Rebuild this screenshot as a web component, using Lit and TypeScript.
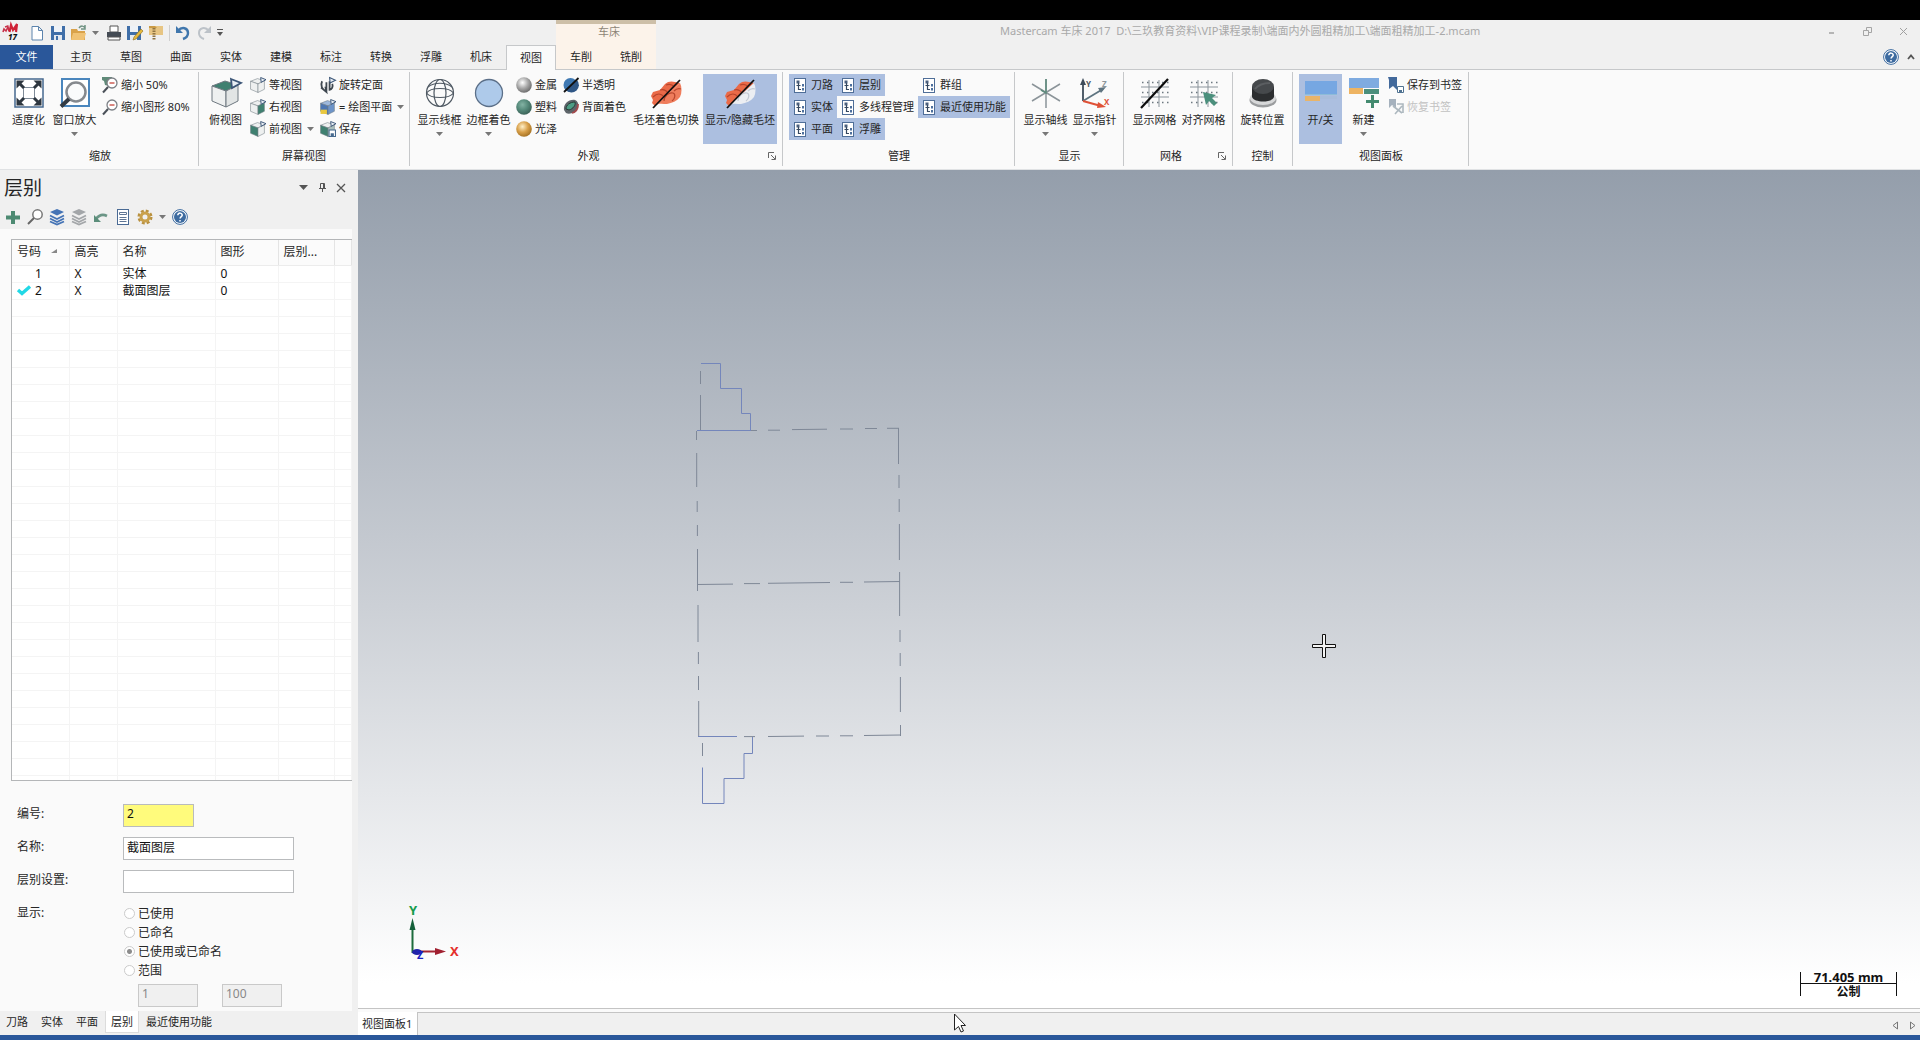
import { LitElement, html, svg, css, nothing } from "lit";
import type { TemplateResult } from "lit";
import { customElement, state } from "lit/decorators.js";
import { classMap } from "lit/directives/class-map.js";

type Tpl = TemplateResult;

const icon = (size: number, box: string, body: unknown) => html`
  <svg width=${size} height=${size} viewBox=${box} fill="none" aria-hidden="true">${body}</svg>`;
const i16 = (body: unknown) => icon(16, "0 0 16 16", body);
const i30 = (body: unknown) => icon(30, "0 0 30 30", body);

/* ---------- quick access icons ---------- */
const logo = icon(18, "0 0 18 18", svg`
  <path d="M1 8 L2 5 L4 7 L6 3 L7 7 M3 3 L6 2" stroke="#c8324a" stroke-width="1.6"/>
  <path d="M7.500 8 L9 1 L11 6 L15 0 L14 8 M10 6 L15 4" stroke="#cf2237" stroke-width="2.200"/>
  <text x="6" y="16" font-family="Noto Sans, sans-serif" font-size="8" font-weight="800" font-style="italic" fill="#111">17</text>`);
const newFile = i16(svg`<path d="M3 1.500h6.500l4 4v9.500H3z M9.500 1.500v4h4" fill="#fff" stroke="#5c84ad"/>`);
const save = i16(svg`
  <path d="M1 1h14v14H1z" fill="#3f6ea8"/><path d="M4 1h8v6H4z" fill="#eef2f7"/>
  <path d="M4 10h8v5H4z" fill="#e4e9f0"/><path d="M6 11h2v4H6z" fill="#3f6ea8"/>`);
const openFile = i16(svg`
  <path d="M0 4h6l1 2h7v9H0z" fill="#d9a24a"/><path d="M2 8h13l-2 7H0z" fill="#f0c274"/>
  <path d="M8 3c2-3 5-2 6 0M14 0v4h-4" stroke="#6f9282" stroke-width="1.500"/>`);
const printer = i16(svg`
  <path d="M4 1h8v6H4z" fill="#fff" stroke="#555"/><path d="M1 7h14v5H1z" fill="#444b54"/>
  <path d="M2 12h12v3H2z" fill="#fff" stroke="#555"/>`);
const saveAs = i16(svg`
  <path d="M0 1h14v14H0z" fill="#3f6ea8"/><path d="M3 1h8v6H3z" fill="#eef2f7"/><path d="M3 10h7v5H3z" fill="#e4e9f0"/>
  <path d="M7 12l7-8 2 2-7 8-3 1z" fill="#e6b93c" stroke="#8a6a1e" stroke-width=".6"/>`);
const zip = i16(svg`
  <path d="M1 1h14v9H1z" fill="#e7c583"/><path d="M1 1h6l2 2H1z" fill="#c99a45"/>
  <path d="M6 3v12" stroke="#8f7442" stroke-width="3" stroke-dasharray="1.500 1"/>`);
const undo = i16(svg`<path d="M3 6c4-5 10-3 10 2 0 3-2 5-5 6" stroke="#4077ad" stroke-width="2.400"/><path d="M1 1v7h7z" fill="#4077ad"/>`);
const redo = i16(svg`<path d="M13 6c-4-5-10-3-10 2 0 3 2 5 5 6" stroke="#bcc2c8" stroke-width="2"/><path d="M15 1v7h-7z" fill="#bcc2c8"/>`);

const caret = html`<svg class="caret" width="7" height="4" viewBox="0 0 7 4" aria-hidden="true"><path d="M0 0h7L3.500 4z" fill="#777"/></svg>`;

/* ---------- ribbon icons ---------- */
const fit = i30(svg`
  <rect x="1" y="1" width="28" height="28" fill="#fff" stroke="#46688f" stroke-width="1.500"/>
  <rect x="9.500" y="9.500" width="11" height="11" stroke="#7f8b98"/>
  <path d="M10 10L6 6M20 10l4-4M10 20l-4 4M20 20l4 4" stroke="#2e3740" stroke-width="3"/>
  <path d="M2.500 2.500h8l-8 8zM27.500 2.500v8l-8-8zM2.500 27.500v-8l8 8zM27.500 27.500h-8l8-8z" fill="#2e3740"/>`);
const zoomWindow = i30(svg`
  <rect x="2" y="1" width="27" height="27" fill="#fff" stroke="#4a86bd" stroke-width="2"/>
  <circle cx="16" cy="14" r="9.500" fill="#fafbfc" stroke="#85898e" stroke-width="2.500"/>
  <path d="M9 21l-8 7.500" stroke="#333b44" stroke-width="4"/>`);
const zoomOut = (green: boolean) => i16(svg`
  ${green ? svg`<path d="M0 0h10v3L5 4l2 5-4-1-1-4-2-1z" fill="#5f8a78"/>` : nothing}
  <circle cx="10" cy="6" r="5" fill="#fff" stroke="#7c8086" stroke-width="1.300"/>
  <path d="M7.500 6h5" stroke="#c4453c" stroke-width="1.300"/><path d="M6 10l-5 5.500" stroke="#4a5058" stroke-width="2"/>`);

const cubeShape = (top: string, left: string, right: string) => svg`
  <path d="M1 8L14 3l13 4-12 6z" fill=${top} stroke="#6e7880"/>
  <path d="M1 8l14 5v16L1 23z" fill=${left} stroke="#6e7880"/>
  <path d="M15 13l12-6v16l-12 6z" fill=${right} stroke="#6e7880"/>
  <path d="M20 1l10 4-9 5z" fill="#e8eef4" stroke="#3c5677" stroke-width="1.800"/>`;
const G = "#3f8070";
const W = "#eef0f0";
const cubeBig = i30(cubeShape(G, W, "#e2e5e5"));
const cubeSmall = (t: string, l: string, r: string, extra: unknown = nothing) =>
  icon(16, "0 0 30 30", svg`${cubeShape(t, l, r)}${extra}`);
const rotatePlane = icon(16, "0 0 30 30", svg`
  <path d="M4 8c-4 8 0 16 8 19M12 27V10M2 20l10 8-2-10M18 8v16c4 0 7-6 5-11" stroke="#3f4850" stroke-width="3.400"/>
  <path d="M18 1l11 5-10 5z" fill="#e8eef4" stroke="#3c5677" stroke-width="2"/>`);

const wireSphere = i30(svg`
  <g stroke="#4f5963" stroke-width="1.200"><circle cx="15" cy="15" r="13.500"/><ellipse cx="15" cy="15" rx="6" ry="13.500"/>
  <path d="M1.500 15c4-6 23-6 27 0M1.500 15c4 6 23 6 27 0M3 9c6-5 18-5 24 0"/></g>`);
const shadedSphere = i30(svg`<circle cx="15" cy="15" r="13.500" fill="#aecaea" stroke="#5b6f88" stroke-width="1.300"/>`);
const ball = (id: string, hi: string, mid: string, lo: string) => i16(svg`
  <defs><radialGradient id=${id} cx=".4" cy=".35" r=".65"><stop offset="0" stop-color=${hi}/><stop offset=".55" stop-color=${mid}/><stop offset="1" stop-color=${lo}/></radialGradient></defs>
  <circle cx="8" cy="8" r="7.800" fill=${`url(#${id})`}/>`);
const translucent = i16(svg`<circle cx="7.500" cy="8" r="7" fill="#3f79b3"/><path d="M14 3a7 7 0 0 1-11 10z" fill="#2e5685"/><path d="M1 15L15.500 1" stroke="#111" stroke-width="1.800"/>`);
const backface = i16(svg`
  <path d="M1 11C0 5 6 0 12 1c3 1 4 5 3 8-2 4-8 7-12 5z" fill="#5d6469"/><path d="M9 14c4-1 6-5 6-9" stroke="#a2494c" stroke-width="1.800"/>
  <path d="M3 10c0-4 4-7 9-7 1 3-2 7-6 8z" fill="#4d9c84" stroke="#263b35"/>`);
const stock = (white: boolean) => icon(32, "0 0 32 30", svg`
  <path d="M1 17l2-4 7-2 5-6c3-3 7-3 10-2l5 1L5 27l-3-3 1-3z" fill="#ea6a48"/>
  <path d="M3 18c4-4 8-4 11 0M10 11c3-1 6 0 8 3M16 6c3-1 6-1 8 2" stroke="#b8462d" stroke-width="1.200"/>
  <path d="M30 4c2 4 2 10 0 14-3 4-8 6-13 7-4 0-8-1-11 1z" fill=${white ? "#eceef2" : "#ef7d5c"}/>
  <path d="M14 22c0-5 5-9 9-8 3 1 2 6-1 8M24 12c2-2 4-3 7-2" stroke=${white ? "#c3c9d3" : "#b8462d"} stroke-width="1.200"/>
  <path d="M3 29L30 1" stroke="#111" stroke-width="1.800"/>`);
const tree = i16(svg`
  <rect x="2.500" y="1.500" width="11" height="14" fill="#fff" stroke="#4f6e98"/>
  <path d="M4.500 3.500h3v3h-3z" fill="#4a5f7d"/><path d="M6.500 6v6.500h2.500M4.500 8.500h4" stroke="#35475f" stroke-width="1.200"/>
  <path d="M10 7h2v2.500h-2zM10 11h2v2.500h-2z" fill="#4d6f9c"/>`);
const axes = i30(svg`<path d="M15 1v29M1 6l28 17M29 6L1 23" stroke="#8b9499" stroke-width="1.500"/><path d="M15 1v14l-5-3" stroke="#5d8a7c" stroke-width="1.500"/>`);
const gnomon = i30(svg`
  <path d="M3 23V4" stroke="#3e4c5a" stroke-width="1.800"/><path d="M0 7L3 0l3 7z" fill="#3e4c5a"/>
  <path d="M3 23L23 11" stroke="#5e7480" stroke-width="1.800"/><path d="M18 10l8-1-5 6z" fill="#5e7480"/>
  <path d="M3 23l18 5" stroke="#df5136" stroke-width="2"/><path d="M18 24l8 5-9 1z" fill="#df5136"/>
  <g font-family="Noto Sans, sans-serif" font-size="8" font-weight="700"><text x="6" y="9" fill="#4a5560">Y</text><text x="22" y="9" fill="#8d969c">Z</text><text x="24" y="27" fill="#df5136">X</text></g>`);
const gridLines = svg`
  <path d="M1 9h28M1 19h28M9 2v27M19 2v27" stroke="#8c959c"/>
  <path d="M2 4.500h27M2 14.500h27M2 24.500h27" stroke="#6d7880" stroke-width="1.500" stroke-dasharray="1.500 3.500"/>`;
const gridShow = i30(svg`${gridLines}<path d="M1 30L28 1" stroke="#0c0c0c" stroke-width="2.200"/>`);
const gridSnap = i30(svg`${gridLines}<path d="M14 14l13 3-4 3 5 5-3 3-5-5-3 4z" fill="#4b8f7c"/>`);
const knob = i30(svg`
  <ellipse cx="15" cy="22" rx="13.500" ry="7.500" fill="#9a9c9e"/><ellipse cx="15" cy="20" rx="13" ry="7" fill="#d7d8d9"/>
  <path d="M4 9v10c2 6 20 6 22 0V9z" fill="#2c2e30"/><ellipse cx="15" cy="8.500" rx="11" ry="7.500" fill="#46494c"/><path d="M7 11c4-5 9-6 15-6" stroke="#5b5e61" stroke-width="2"/>`);
const sheetToggle = icon(32, "0 0 32 30", svg`<path d="M0 2h32v14H0z" fill="#76a7e2"/><path d="M0 15h32v1H0z" fill="#8dbcd8"/><path d="M0 17h15v5H0z" fill="#e9b469"/><path d="M15 17h17v3H15z" fill="#a9bddb"/>`);
const sheetNew = icon(30, "0 0 30 30", svg`<path d="M0 0h30v10H0z" fill="#7fabe0"/><path d="M0 10h14v6H0z" fill="#eeb462"/><path d="M15 11h15v5H15z" fill="#4b8f7c"/><path d="M23.500 17v13M17 23.500h13" stroke="#438a6f" stroke-width="3"/>`);
const bookmark = (off: boolean) => i16(off
  ? svg`<path d="M1 0h7v9L4 6 1 9z" fill="#a5b1bd"/><path d="M5 7l9 7M14 7l-7 8M9 5h6v9" stroke="#adb8bf" stroke-width="1.600"/>`
  : svg`<path d="M0 0h9v13l-4-4-4 3V3z" fill="#42699b"/><path d="M9.500 9.500h6v6h-6z" fill="#fff" stroke="#4f7291"/><path d="M11 13h3v2h-3z" fill="#4f7291"/>`);
const launcher = html`<button class="launch" aria-label="对话框"><svg width="8" height="8" viewBox="0 0 8 8" fill="none"><path d="M.5 6V.500H6M3 3l4 4M7.500 3.500v4h-4" stroke="#666"/></svg></button>`;

/* ---------- panel icons ---------- */
const help = i16(svg`<circle cx="8" cy="8" r="7.400" fill="#fff" stroke="#3d6ba0"/><circle cx="8" cy="8" r="6" fill="#3d6ba0"/>
  <path d="M5.800 6.300c0-3 4.600-2.800 4.400 0-.1 1.300-2.100 1.500-2.100 3.200M8 11v1.500" stroke="#fff" stroke-width="1.500"/>`);
const layers = (c: string) => i16(svg`<path d="M8 0l7 3-7 3.500L1 3z" fill=${c}/><path d="M1 6.500l7 3.500 7-3.500M1 9.500L8 13l7-3.500M1 12.500l7 3 7-3" stroke=${c} stroke-width="1.800"/>`);
const panelTools: { label: string; art: Tpl }[] = [
  { label: "添加", art: i16(svg`<path d="M8 2v13M1 8.500h14" stroke="#4d8a72" stroke-width="4"/>`) },
  { label: "查找", art: i16(svg`<circle cx="10.500" cy="5.500" r="4.700" fill="#fff" stroke="#777" stroke-width="1.500"/><path d="M7 9l-6 6" stroke="#666" stroke-width="2"/>`) },
  { label: "全部显示", art: layers("#4473b5") },
  { label: "全部隐藏", art: layers("#a3a6a9") },
  { label: "重置", art: i16(svg`<path d="M14 7c-4-2-8-1-11 3" stroke="#6b9586" stroke-width="2.600"/><path d="M1 6v7h7z" fill="#5b8d7a"/>`) },
  { label: "属性", art: i16(svg`<rect x="2.500" y=".5" width="11" height="15" fill="#fff" stroke="#4a6a94"/><path d="M4.500 3.500h7v2h-7zM4.500 8.500h7M4.500 10.500h7M4.500 12.500h7" stroke="#5f7594"/>`) },
];
const gear = i16(svg`<circle cx="8" cy="8" r="6.300" stroke="#b9913f" stroke-width="2.400" stroke-dasharray="2.900 2.050"/><circle cx="8" cy="8" r="4" stroke="#c9a14c" stroke-width="3"/>`);

const big = (art: Tpl, label: string, o: { menu?: boolean; on?: boolean; cls?: string } = {}) => html`
  <button class="big ${o.cls ?? ""} ${o.on ? "on" : ""}">
    <span class="art">${art}</span><span class="lbl">${label}</span>${o.menu ? caret : nothing}
  </button>`;
const small = (art: Tpl, label: string, o: { menu?: boolean; on?: boolean; off?: boolean } = {}) => html`
  <button class="small ${o.on ? "on" : ""}" ?disabled=${o.off ?? false}>${art}<span>${label}</span>${o.menu ? caret : nothing}</button>`;
const group = (cls: string, label: string, body: Tpl, launch = false) => html`
  <section class="group ${cls} ${launch ? "launches" : ""}" aria-label=${label}>
    <div class="tools">${body}</div>
    <div class="caption">${label}</div>${launch ? launcher : nothing}
  </section>`;

@customElement("app-root")
export class AppRoot extends LitElement {
  @state() private level = 2;

  static styles = css`
    :host { display: block; --line: #c6c8ca; --sel: #acbfe0; --fog: #f0f0f0; --paper: #fafafa;
      font-family: "Noto Sans", "Noto Sans CJK SC", sans-serif; font-size: 11px; line-height: 16px; color: #262626; }
    * { box-sizing: border-box; }
    button, input { font: inherit; color: inherit; margin: 0; }
    button { background: none; border: 0; padding: 0; white-space: nowrap; }
    svg { display: block; flex: none; overflow: visible; }
    .app { position: relative; height: 100vh; display: flex; flex-direction: column; overflow: hidden; background: var(--fog); }
    .strip { height: 20px; background: #000; flex: none; }

    .top { display: grid; grid-template-columns: 556px 100px 1fr; grid-template-rows: 25px 24px; border-bottom: 1px solid var(--line); flex: none; }
    .quick { display: flex; align-items: center; gap: 5px; padding: 0 2px; }
    .quick button { display: flex; }
    .quick .caret { margin: 0 2px 0 0; }
    .quick .sep { width: 1px; height: 16px; background: #cfcfcf; }
    .quick .logo { margin-right: 4px; }
    .ctx { background: #fcf3ea; border-top: 4px solid #cdbfa8; color: #8d8577; text-align: center; padding-left: 6px; }
    .title { display: flex; align-items: center; padding: 0 12px 3px 0; color: #a9a9a9; }
    .title h1 { margin: 0 auto 0 344px; font-size: 11px; font-weight: 400; white-space: pre; line-height: 16px; }
    .title .win { display: flex; gap: 27px; }
    .tabs { display: flex; }
    .tabs button { width: 50px; height: 24px; }
    .tabs .file { width: 53px; margin-right: 3px; background: #2a579a; color: #fff; }
    .tabs .active { position: relative; background: var(--paper); border: 1px solid var(--line); border-bottom: 0; height: 25px; }
    .tabs.extra { background: #fcf3ea; }
    .right { display: flex; justify-content: flex-end; align-items: center; gap: 8px; padding-right: 5px; }

    .ribbon { display: flex; height: 100px; padding: 2px 0; background: var(--paper); border-bottom: 1px solid #e0e2e4; flex: none; }
    .group { position: relative; display: flex; flex-direction: column; height: 94px; padding: 2px 0 0 5px; border-right: 1px solid var(--line); flex: none; }
    .zoom { width: 199px; padding-left: 7px; } .views { width: 211px; } .look { width: 373px; } .manage { width: 232px; }
    .pair { width: 109px; } .control { width: 60px; } .sheets { width: 176px; }
    .tools { display: flex; height: 70px; }
    .caption { margin: 4px 5px 0 0; text-align: center; line-height: 16px; }
    .launches .caption { margin-right: 20px; }
    .launch { position: absolute; right: 6px; bottom: 6px; }
    .big { display: flex; flex-direction: column; align-items: center; width: 49px; height: 70px; padding-top: 4px; flex: none; }
    .big.mid { width: 43px; }
    .big.wide { width: 74px; }
    .big .art { height: 30px; margin-bottom: 4px; }
    .big .caret { margin-top: 4px; }
    .col { display: flex; flex-direction: column; align-items: flex-start; }
    .small { display: flex; align-items: center; gap: 3px; height: 22px; padding: 0 3px; }
    .small .caret { margin-left: 2px; }
    .small:disabled { color: #c2c2c2; }
    .on { background: var(--sel); }
    .manage, .pair, .sheets { padding-left: 6px; }
    .manage .small { padding-right: 4px; }

    .work { flex: 1; min-height: 0; display: flex; }
    .side { width: 352px; display: flex; flex-direction: column; background: var(--paper); flex: none; }
    .side header { display: flex; align-items: center; gap: 10px; height: 35px; padding: 0 7px 0 4px; background: var(--fog); }
    .side h2 { margin: 0 auto 0 0; font-size: 19px; font-weight: 400; line-height: 24px; }
    .bar { display: flex; align-items: center; gap: 6px; height: 24px; padding: 0 5px; background: var(--fog); }
    .bar .gearmenu { display: flex; align-items: center; gap: 6px; }
    .grid { flex: 1; min-height: 0; overflow: hidden; margin: 10px 0 0 11px; border: 1px solid #b4b6b8; border-right: 0; background: #fff; font-size: 12px; }
    table { width: 100%; border-collapse: collapse; table-layout: fixed; }
    th { height: 25px; padding: 0 0 0 5px; text-align: left; font-weight: 400; background: #fbfbfb; border-right: 1px solid #e4e4e4; border-bottom: 1px solid #ececec; white-space: nowrap; }
    th .sort { display: inline-block; margin: 0 0 3px 10px; }
    td { height: 17px; padding: 0 0 0 5px; line-height: 16px; border-right: 1px solid #f4f4f4; border-bottom: 1px solid #f4f4f4; white-space: nowrap; color: #111; }
    .c1 { width: 57px; } .c2 { width: 48px; } .c3 { width: 98px; } .c4 { width: 63px; } .c5 { width: 56px; }
    .no { display: flex; align-items: center; gap: 3px; }
    .no .mark { width: 15px; }
    .form { display: grid; grid-template-columns: 106px auto; row-gap: 10px; justify-content: start; padding: 23px 0 4px 17px; font-size: 12px; line-height: 20px; }
    input[type="text"] { height: 23px; width: 171px; padding: 0 3px 4px; border: 1px solid #b9bbbd; background: #fff; color: #111; outline: 0; }
    input.num { width: 71px; background: #fffb7c; }
    .opts { display: flex; flex-direction: column; align-items: flex-start; padding: 1px 0 0 1px; border: 0; margin: 0; min-width: 0; }
    .opts label { display: flex; align-items: center; gap: 3px; height: 19px; }
    input[type="radio"] { appearance: none; width: 11px; height: 11px; border: 1px solid #cbcbcb; border-radius: 50%; background: #fff; }
    input[type="radio"]:checked { background: radial-gradient(circle, #8c8c8c 0 2px, #fff 3px); }
    .range { display: flex; gap: 24px; padding: 4px 0 0 14px; }
    .range input { width: 60px; background: var(--fog); color: #888; border-color: #c9c9c9; }
    .sidetabs { display: flex; gap: 1px; height: 24px; background: var(--fog); }
    .sidetabs button { height: 22px; padding: 0 6px; }
    .sidetabs .cur { background: #fff; border: 1px solid #dcdcdc; border-top: 0; padding: 0 5px; }

    .stage { flex: 1; min-width: 0; display: flex; flex-direction: column; margin-left: 6px; }
    .view { position: relative; flex: 1; background: linear-gradient(#949eab, #ccd0d6 52%, #fff 97%); }
    .part { position: absolute; left: 332px; top: 180px; }
    .triad { position: absolute; left: 42px; bottom: 47px; }
    .cross { position: absolute; left: 954px; top: 464px; }
    .scale { position: absolute; right: 23px; bottom: 9px; width: 97px; text-align: center; font-weight: 700; color: #111; }
    .scale .len { font-size: 13px; line-height: 12px; height: 13px; border-bottom: 1px solid #111; }
    .scale .unit { font-size: 12px; line-height: 15px; }
    .scale::before, .scale::after { content: ""; position: absolute; top: 1px; height: 24px; width: 1px; background: #111; }
    .scale::before { left: 0; } .scale::after { right: 0; }
    .sheetbar { display: flex; align-items: center; height: 27px; padding-right: 4px; border-top: 1px solid #c4c4c4; background: linear-gradient(#fafafa 0 3px, #c4c4c4 3px 4px, var(--fog) 4px); }
    .sheetbar .tab { align-self: stretch; margin-top: 3px; padding: 0 5px 0 4px; background: #fff; border-right: 1px solid #c4c4c4; }
    .sheetbar .nav { display: flex; gap: 12px; margin: 7px 0 0 auto; }
    .foot { height: 5px; background: #2a579a; flex: none; }
    .mouse { position: absolute; left: 953px; top: 1013px; }
  `;

  private renderTop() {
    const tabs = ["主页", "草图", "曲面", "实体", "建模", "标注", "转换", "浮雕", "机床", "视图"];
    const quick: [string, Tpl][] = [["打印", printer], ["另存为", saveAs], ["压缩", zip]];
    return html`
      <header class="top">
        <div class="quick">
          <span class="logo">${logo}</span>
          <button aria-label="新建文件">${newFile}</button>
          <button aria-label="保存文件">${save}</button>
          <button aria-label="打开">${openFile}</button>
          ${caret}
          ${quick.map(([l, a]) => html`<button aria-label=${l}>${a}</button>`)}
          <span class="sep"></span>
          <button aria-label="撤销">${undo}</button>
          <button aria-label="重做">${redo}</button>
          <button aria-label="自定义"><svg width="6" height="8" viewBox="0 0 6 8"><path d="M0 0h6v1H0zM0 3h6L3 7z" fill="#555"/></svg></button>
        </div>
        <div class="ctx">车床</div>
        <div class="title">
          <h1>Mastercam 车床 2017  D:\\三玖教育资料\\VIP课程录制\\端面内外圆粗精加工\\端面粗精加工-2.mcam</h1>
          <div class="win">
            <button aria-label="最小化"><svg width="9" height="9" viewBox="0 0 9 9"><path d="M2 5h5v2H2z" fill="#b5b5b5"/></svg></button>
            <button aria-label="还原"><svg width="9" height="9" viewBox="0 0 9 9" fill="none"><path d="M.5 3.500h5v5h-5zM3.500 3V.500h5v5H6" stroke="#a5a5a5"/></svg></button>
            <button aria-label="关闭"><svg width="9" height="9" viewBox="0 0 9 9" fill="none"><path d="M1 1l7 7M8 1L1 8" stroke="#a0a0a0"/></svg></button>
          </div>
        </div>
        <nav class="tabs">
          <button class="file">文件</button>
          ${tabs.map((t) => html`<button class=${classMap({ active: t === "视图" })}>${t}</button>`)}
        </nav>
        <nav class="tabs extra"><button>车削</button><button>铣削</button></nav>
        <div class="right">
          <button aria-label="帮助">${help}</button>
          <button aria-label="折叠功能区"><svg width="8" height="6" viewBox="0 0 8 6" fill="none"><path d="M1 5l3-3.500L7 5" stroke="#555" stroke-width="1.800"/></svg></button>
        </div>
      </header>`;
  }

  private renderRibbon() {
    return html`
      <div class="ribbon">
        ${group("zoom", "缩放", html`
          ${big(fit, "适度化", { cls: "mid" })}${big(zoomWindow, "窗口放大", { menu: true })}
          <div class="col">${small(zoomOut(true), "缩小 50%")}${small(zoomOut(false), "缩小图形 80%")}</div>`)}
        ${group("views", "屏幕视图", html`
          ${big(cubeBig, "俯视图", { cls: "mid" })}
          <div class="col">${small(cubeSmall(W, W, W), "等视图")}${small(cubeSmall(W, W, G), "右视图")}${small(cubeSmall(W, G, W), "前视图", { menu: true })}</div>
          <div class="col">
            ${small(rotatePlane, "旋转定面")}
            ${small(cubeSmall("#9db8dc", "#4d77b3", "#6d94c8", svg`<path d="M1 20h12v8H1z" fill="#e9c83e"/>`), "= 绘图平面", { menu: true })}
            ${small(cubeSmall(W, G, "#a9bdbb", svg`<path d="M17 17h12v12H17z" fill="#fff" stroke="#476a8f" stroke-width="2"/><path d="M20 23h6v6h-6z" fill="#476a8f"/>`), "保存")}
          </div>`)}
        ${group("look", "外观", html`
          ${big(wireSphere, "显示线框", { menu: true })}${big(shadedSphere, "边框着色", { menu: true })}
          <div class="col">
            ${small(ball("metal", "#ffffff", "#a9a9a9", "#6f6f6f"), "金属")}
            ${small(ball("plastic", "#83b3a4", "#55897a", "#3c6459"), "塑料")}
            ${small(ball("gloss", "#fff0c8", "#d8a04a", "#a87425"), "光泽")}
          </div>
          <div class="col">${small(translucent, "半透明")}${small(backface, "背面着色")}</div>
          ${big(stock(false), "毛坯着色切换", { cls: "wide" })}${big(stock(true), "显示/隐藏毛坯", { cls: "wide", on: true })}`, true)}
        ${group("manage", "管理", html`
          <div class="col">${["刀路", "实体", "平面"].map((t) => small(tree, t, { on: true }))}</div>
          <div class="col">${small(tree, "层别", { on: true })}${small(tree, "多线程管理")}${small(tree, "浮雕", { on: true })}</div>
          <div class="col">${small(tree, "群组")}${small(tree, "最近使用功能", { on: true })}</div>`)}
        ${group("pair", "显示", html`${big(axes, "显示轴线", { menu: true })}${big(gnomon, "显示指针", { menu: true })}`)}
        ${group("pair", "网格", html`${big(gridShow, "显示网格")}${big(gridSnap, "对齐网格")}`, true)}
        ${group("control", "控制", html`${big(knob, "旋转位置")}`)}
        ${group("sheets", "视图面板", html`
          ${big(sheetToggle, "开/关", { cls: "mid", on: true })}${big(sheetNew, "新建", { cls: "mid", menu: true })}
          <div class="col">${small(bookmark(false), "保存到书签")}${small(bookmark(true), "恢复书签", { off: true })}</div>`)}
      </div>`;
  }

  private renderSide() {
    const rows = [
      { no: 1, name: "实体", count: 0 },
      { no: 2, name: "截面图层", count: 0 },
    ];
    const check = html`<svg width="14" height="11" viewBox="0 0 14 11" fill="none"><path d="M1 5l4 3.500 8-7" stroke="#22d8e6" stroke-width="3.400"/></svg>`;
    const options = ["已使用", "已命名", "已使用或已命名", "范围"];
    return html`
      <aside class="side">
        <header>
          <h2>层别</h2>
          <button aria-label="窗口位置"><svg width="9" height="5" viewBox="0 0 9 5"><path d="M0 0h9L4.500 5z" fill="#555"/></svg></button>
          <button aria-label="自动隐藏"><svg width="9" height="9" viewBox="0 0 9 9" fill="none"><path d="M2.500 5V.500h4V5M5.500 1v4M1 5.500h7M4.500 6v3" stroke="#555"/></svg></button>
          <button aria-label="关闭面板"><svg width="8" height="8" viewBox="0 0 8 8" fill="none"><path d="M0 0l8 8M8 0L0 8" stroke="#555" stroke-width="1.300"/></svg></button>
        </header>
        <div class="bar">
          ${panelTools.map((t) => html`<button aria-label=${t.label}>${t.art}</button>`)}
          <button class="gearmenu" aria-label="选项">${gear}${caret}</button>
          <button aria-label="面板帮助">${help}</button>
        </div>
        <div class="grid">
          <table>
            <thead><tr>
              <th class="c1">号码<svg class="sort" width="6" height="4" viewBox="0 0 6 4"><path d="M0 4L6 0v4z" fill="#888"/></svg></th>
              <th class="c2">高亮</th><th class="c3">名称</th><th class="c4">图形</th><th class="c5">层别...</th><th></th>
            </tr></thead>
            <tbody>
              ${rows.map((r) => html`<tr @click=${() => (this.level = r.no)}>
                <td><span class="no"><span class="mark">${r.no === this.level ? check : nothing}</span>${r.no}</span></td>
                <td>X</td><td>${r.name}</td><td>${r.count}</td><td></td><td></td></tr>`)}
              ${Array.from({ length: 60 }, () => html`<tr><td></td><td></td><td></td><td></td><td></td><td></td></tr>`)}
            </tbody>
          </table>
        </div>
        <div class="form">
          <label for="num">编号:</label><input id="num" class="num" type="text" .value=${String(this.level)}>
          <label for="name">名称:</label><input id="name" type="text" .value=${rows[this.level - 1].name}>
          <label for="set">层别设置:</label><input id="set" type="text">
          <span id="show">显示:</span>
          <fieldset class="opts" aria-labelledby="show">
            ${options.map((o, i) => html`<label><input type="radio" name="show" ?checked=${i === 2}>${o}</label>`)}
            <div class="range">
              <input type="text" aria-label="范围起点" value="1" disabled>
              <input type="text" aria-label="范围终点" value="100" disabled>
            </div>
          </fieldset>
        </div>
        <nav class="sidetabs">
          ${["刀路", "实体", "平面", "层别", "最近使用功能"].map((t) => html`<button class=${classMap({ cur: t === "层别" })}>${t}</button>`)}
        </nav>
      </aside>`;
  }

  private renderStage() {
    return html`
      <main class="stage">
        <div class="view">
          <svg class="part" width="220" height="470" viewBox="690 350 220 470" fill="none" role="img" aria-label="截面图形">
            <g stroke="#7f8897">
              <path d="M700.500 371v13M700.500 395v36"/>
              <path d="M751 430.500h6M768 430.200h12M792 429.600l35-.4M840 429h13M865 428.500h12M887 428.300h12"/>
              <path d="M898.500 428v36M899 475v13M899.200 499v13M899.400 524v36M899.600 572v44M900 630v12M900.200 653v13M900.400 677v35M900.500 725v11"/>
              <path d="M696.500 431v9M696.700 453v34M697.200 501v11M697.400 525v11M697.500 549v42M698 605v37M698.400 652v12M698.500 676v14M698.700 701v36"/>
              <path d="M697 584.500l36-.4M744 583.600h16M768 583.300l62-.8M840 582.300h13M864 582l36-.5"/>
              <path d="M744 736.600h11M768 736.500l36-.4M816 736h13M840 735.800h13M864 735.500l37-.5"/>
              <path d="M702.500 743v13"/>
            </g>
            <g stroke="#7486bb">
              <path d="M701 363.500h19.500V388.500h21V413.500h9V430.500M697 430.500h54"/>
              <path d="M698 736.500h39M752.500 737v16.500h-8.500v25h-20v25h-21.500v-36"/>
            </g>
          </svg>
          <svg class="cross" width="24" height="24" viewBox="0 0 24 24"><path d="M10.500.5h3v10h10v3h-10v10h-3v-10H.5v-3h10z" fill="#f4f4f4" stroke="#111"/></svg>
          <svg class="triad" width="60" height="56" viewBox="0 0 60 56" fill="none" font-family="Noto Sans, sans-serif" font-weight="700" font-size="13">
            <path d="M12.500 48V22" stroke="#1d6b3c" stroke-width="2"/><path d="M9.500 25l3-12 3 12z" fill="#15603a"/>
            <path d="M13 46.500h26" stroke="#a52533" stroke-width="2"/><path d="M35 43l11 3.500L35 50z" fill="#a02030"/>
            <ellipse cx="17" cy="47" rx="5" ry="3" fill="#2223a8"/>
            <text x="9" y="10" fill="#169b4c">Y</text><text x="50" y="51" fill="#e5302c">X</text><text x="17" y="54" font-size="11" fill="#1a1fc2">Z</text>
          </svg>
          <div class="scale"><div class="len">71.405 mm</div><div class="unit">公制</div></div>
        </div>
        <div class="sheetbar">
          <button class="tab">视图面板1</button>
          <div class="nav">
            <button aria-label="上一个"><svg width="6" height="9" viewBox="0 0 6 9" fill="none"><path d="M5.500 1v7L1 4.500z" stroke="#777"/></svg></button>
            <button aria-label="下一个"><svg width="6" height="9" viewBox="0 0 6 9" fill="none"><path d="M.5 1v7L5 4.500z" stroke="#777"/></svg></button>
          </div>
        </div>
      </main>`;
  }

  render() {
    return html`
      <div class="app">
        <div class="strip"></div>
        ${this.renderTop()}
        ${this.renderRibbon()}
        <div class="work">${this.renderSide()}${this.renderStage()}</div>
        <div class="foot"></div>
        <svg class="mouse" width="14" height="20" viewBox="0 0 14 20"><path d="M1.500 1v16l4-3.500 2.500 5.500 2.500-1-2.500-5.500h4.500z" fill="#fff" stroke="#222"/></svg>
      </div>`;
  }
}
